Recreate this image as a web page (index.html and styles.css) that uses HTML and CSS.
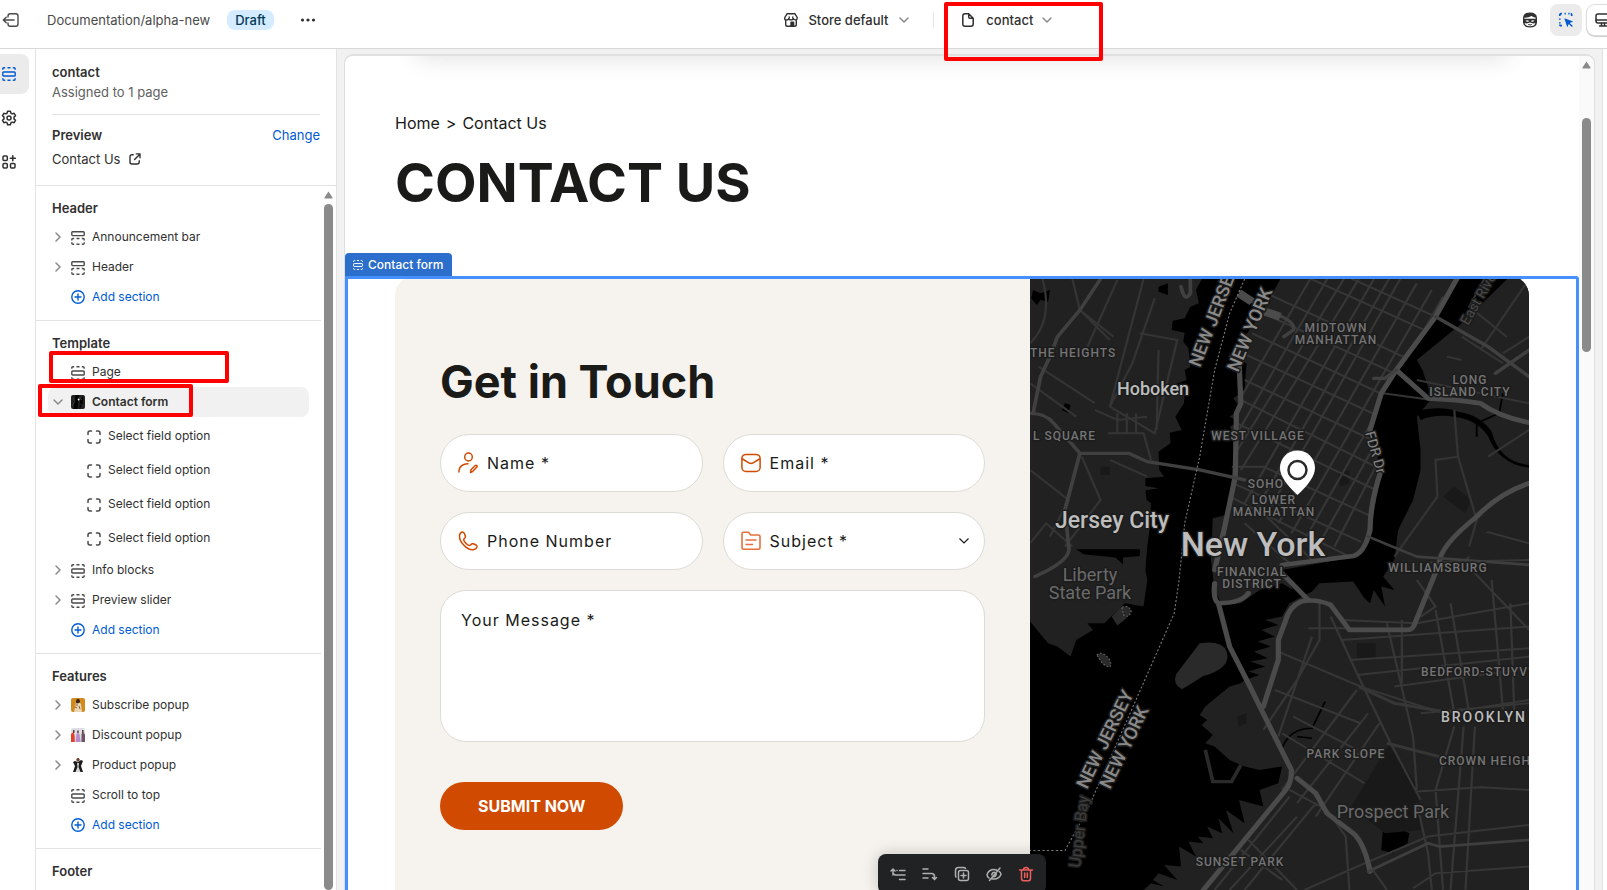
FILE: index.html
```html
<!DOCTYPE html>
<html lang="en">
<head>
<meta charset="utf-8">
<title>Documentation/alpha-new - contact</title>
<link rel="stylesheet" href="styles.css">
</head>
<body>
<svg class="defs" aria-hidden="true">
  <symbol id="i-chev" viewBox="0 0 8 12"><path d="M2 2l4 4-4 4" fill="none" stroke="currentColor" stroke-width="1.5" stroke-linecap="round" stroke-linejoin="round"/></symbol>
  <symbol id="i-down" viewBox="0 0 12 8"><path d="M2 2l4 4 4-4" fill="none" stroke="currentColor" stroke-width="1.5" stroke-linecap="round" stroke-linejoin="round"/></symbol>
  <symbol id="i-top" viewBox="0 0 14 14"><g fill="none" stroke="currentColor" stroke-width="1.4"><rect x=".8" y=".8" width="12.400" height="3.800" rx=".8"/><path d="M.8 9.400V8.600Q.8 7.500 2 7.500H3.200M5.500 7.500h3M10.800 7.500H12Q13.200 7.500 13.200 8.600V9.400M.8 11.300V12Q.8 13.200 2 13.200H3.200M5.500 13.200h3M10.800 13.200H12Q13.200 13.200 13.200 12V11.300"/></g></symbol>
  <symbol id="i-section" viewBox="0 0 14 14"><g fill="none" stroke="currentColor" stroke-width="1.4"><rect x=".8" y="5" width="12.400" height="4" rx=".8"/><path d="M.8 2.800V2Q.8 .8 2 .8H3.200M5.500 .8h3M10.800 .8H12Q13.200 .8 13.200 2V2.800M.8 11.200V12Q.8 13.200 2 13.200H3.200M5.500 13.200h3M10.800 13.200H12Q13.200 13.200 13.200 12V11.200"/></g></symbol>
  <symbol id="i-block" viewBox="0 0 14 14"><path d="M1 4.500V3Q1 1 3 1h1.500M9.500 1H11q2 0 2 2v1.500M13 9.500V11q0 2-2 2H9.500M4.500 13H3q-2 0-2-2V9.500" fill="none" stroke="currentColor" stroke-width="1.500" stroke-linecap="round"/></symbol>
  <symbol id="i-add" viewBox="0 0 14 14"><g fill="none" stroke="currentColor" stroke-width="1.400" stroke-linecap="round"><circle cx="7" cy="7" r="6.200"/><path d="M7 4v6M4 7h6"/></g></symbol>
</svg>

<header class="topbar">
  <div class="bar-left">
    <button class="plain" aria-label="Exit"><svg width="18" height="16" viewBox="0 0 18 16" fill="none" stroke="#4a4a4a" stroke-width="1.400" stroke-linecap="round" stroke-linejoin="round"><path d="M6 5V4q0-2.300 2.300-2.300h5.400Q16 1.700 16 4v8q0 2.300-2.300 2.300H8.300Q6 14.300 6 12v-1M12 8H1.500M4.200 5.200L1.300 8l2.900 2.800"/></svg></button>
    <span class="theme-name">Documentation/alpha-new</span>
    <span class="badge">Draft</span>
    <button class="plain more" aria-label="More actions"><svg width="16" height="4" viewBox="0 0 16 4" fill="#303030"><circle cx="2.500" cy="2" r="1.600"/><circle cx="8" cy="2" r="1.600"/><circle cx="13.500" cy="2" r="1.600"/></svg></button>
  </div>
  <div class="bar-mid">
    <button class="plain pick"><svg width="14" height="14" viewBox="0 0 14 14" fill="none" stroke="#303030" stroke-width="1.400" stroke-linejoin="round"><path d="M3 .8h8l2.200 3.700v.7q0 1.700-1.700 1.700T9.100 5.200q0 1.700-2.100 1.700T4.900 5.200q0 1.700-2.400 1.700T.8 5.200v-.7zM1.700 7v4.400q0 1.800 1.800 1.800h7q1.800 0 1.800-1.800V7M5.300 4.800V3.500M8.700 4.800V3.500"/><path d="M7 9.300h2.600v3.900H7z" fill="#303030"/></svg><span>Store default</span><svg class="caret" width="12" height="8"><use href="#i-down"/></svg></button>
    <span class="vline"></span>
    <button class="plain pick page-pick"><svg width="12" height="14" viewBox="0 0 12 14" fill="none" stroke="#303030" stroke-width="1.500" stroke-linejoin="round"><path d="M3 .8h3.700L11.200 5.300V11q0 2.200-2.200 2.200H3Q.8 13.200.8 11V3Q.8.8 3 .8zM6.700.8V4q0 1.300 1.300 1.300h3.200"/></svg><span>contact</span><svg class="caret" width="12" height="8"><use href="#i-down"/></svg><i class="mark mark-top"></i></button>
  </div>
  <div class="bar-right">
    <button class="plain" aria-label="Assistant"><svg width="16" height="16" viewBox="0 0 16 16"><path d="M8 .5Q14.800.5 15 6v4.500Q14.500 15.500 8 15.500T1 10.500V6Q1.200.5 8 .5z" fill="#303030"/><path d="M2.300 5.800Q6.500 6 9.500 4q1.500 1.400 4.200 1.700v1H2.300z" fill="#fff"/><path d="M3.500 8.700q2-1 3.600.2Q5.500 10.800 3.500 8.700zM12.500 8.700q-2-1-3.600.2Q10.500 10.800 12.500 8.700z" fill="#fff"/><path d="M2.600 11Q5 12 8 10.600 11 12 13.400 11 12.500 14.200 8 14.200T2.600 11z" fill="#fff"/><path d="M6.200 12.500q1.800.9 3.600 0" stroke="#303030" fill="none"/></svg></button>
    <button class="tool on" aria-label="Inspector"><svg width="16" height="16" viewBox="0 0 16 16"><path d="M1.800 4V3q0-1.300 1.300-1.300H4M6.500 1.700h1.300M10.300 1.700h1.300M13.700 4V3q0-1.300-1-1.300M1.800 6.500v1.300M1.800 10.300v1.300M4 13.700H3q-1.200 0-1.200-1.200" fill="none" stroke="#005bd3" stroke-width="1.700"/><path d="M6.300 6.300l8.900 3.100-3.500 1.600 3.200 3.100-1 1-3.100-3.200-1.500 3.300z" fill="#005bd3"/></svg></button>
    <button class="tool device" aria-label="Desktop"><svg width="16" height="14" viewBox="0 0 16 14" fill="none" stroke="#303030" stroke-width="1.500" stroke-linecap="round"><rect x="1" y="1" width="14" height="9" rx="2"/><path d="M1 7h14M6.500 10v2.500M9.500 10v2.500M4.500 13h7"/></svg></button>
  </div>
</header>

<div class="body">
  <nav class="rail" aria-label="Editor panels">
    <button class="rail-btn on" aria-label="Sections"><svg width="14" height="14"><use href="#i-section"/></svg></button>
    <button class="rail-btn" aria-label="Theme settings"><svg width="16" height="16" viewBox="0 0 16 16" fill="none" stroke="#303030" stroke-width="1.500" stroke-linejoin="round"><path d="M6.600 1.200h2.800l.5 2 1.200.7 2-.6 1.400 2.400-1.500 1.400v1.800l1.500 1.400-1.400 2.400-2-.6-1.200.7-.5 2H6.600l-.5-2-1.200-.7-2 .6-1.400-2.400L3 8.900V7.100L1.500 5.700l1.400-2.400 2 .6 1.200-.7z"/><circle cx="8" cy="8" r="2"/></svg></button>
    <button class="rail-btn" aria-label="App embeds"><svg width="14" height="14" viewBox="0 0 14 14" fill="none" stroke="#303030" stroke-width="1.500" stroke-linecap="round"><rect x="1" y="1" width="4.300" height="4.500" rx="1"/><rect x="1" y="8.500" width="4.300" height="4.500" rx="1"/><rect x="8.500" y="8.500" width="4.500" height="4.500" rx="1"/><path d="M10.800.8v5M8.300 3.300h5"/></svg></button>
  </nav>

  <aside class="sidebar">
    <div class="side-top">
      <h2>contact</h2>
      <p class="sub">Assigned to 1 page</p>
      <div class="preview-row"><h2>Preview</h2><a href="#">Change</a></div>
      <p class="current">Contact Us <svg width="12" height="12" viewBox="0 0 12 12" fill="none" stroke="#303030" stroke-width="1.400" stroke-linecap="round" stroke-linejoin="round"><path d="M4.200 1.800H3Q1 1.800 1 3.800V9q0 2 2 2h5.200q2 0 2-2V7.800M7.200.9H11v3.900M11 .9L5.600 6.400"/></svg></p>
    </div>
    <div class="side-scroll">
      <div class="tree">
        <section class="group">
          <h3>Header</h3>
          <a class="row" href="#"><svg class="chev" width="8" height="12"><use href="#i-chev"/></svg><svg class="ico low" width="14" height="14"><use href="#i-top"/></svg><span>Announcement bar</span></a>
          <a class="row" href="#"><svg class="chev" width="8" height="12"><use href="#i-chev"/></svg><svg class="ico low" width="14" height="14"><use href="#i-top"/></svg><span>Header</span></a>
          <button class="row add"><i class="chev"></i><svg width="14" height="14"><use href="#i-add"/></svg><span>Add section</span></button>
        </section>
        <section class="group">
          <h3>Template</h3>
          <a class="row" href="#"><i class="chev"></i><svg class="ico low" width="14" height="14"><use href="#i-section"/></svg><span>Page</span><i class="mark mark-page"></i></a>
          <a class="row selected" href="#"><svg class="chev open" width="8" height="12"><use href="#i-chev"/></svg><svg width="14" height="14" viewBox="0 0 14 14"><rect width="14" height="14" rx="2" fill="#202020"/><path d="M4.500 0L2.500 14h4l.5-5 1-9zM12 1L9 6l-.5 8 3-4z" fill="#000"/><path d="M2 3l2 3-3 5M8 2l3 3M9 9l4 2" stroke="#444" stroke-width=".6" fill="none"/><circle cx="7.600" cy="4.500" r=".9" fill="#fff"/></svg><span>Contact form</span><i class="mark mark-form"></i></a>
          <div class="sublist">
            <a class="row" href="#"><svg class="ico low" width="14" height="14"><use href="#i-block"/></svg><span>Select field option</span></a>
            <a class="row" href="#"><svg class="ico low" width="14" height="14"><use href="#i-block"/></svg><span>Select field option</span></a>
            <a class="row" href="#"><svg class="ico low" width="14" height="14"><use href="#i-block"/></svg><span>Select field option</span></a>
            <a class="row" href="#"><svg class="ico low" width="14" height="14"><use href="#i-block"/></svg><span>Select field option</span></a>
          </div>
          <a class="row" href="#"><svg class="chev" width="8" height="12"><use href="#i-chev"/></svg><svg class="ico low" width="14" height="14"><use href="#i-section"/></svg><span>Info blocks</span></a>
          <a class="row" href="#"><svg class="chev" width="8" height="12"><use href="#i-chev"/></svg><svg class="ico low" width="14" height="14"><use href="#i-section"/></svg><span>Preview slider</span></a>
          <button class="row add"><i class="chev"></i><svg width="14" height="14"><use href="#i-add"/></svg><span>Add section</span></button>
        </section>
        <section class="group">
          <h3>Features</h3>
          <a class="row" href="#"><svg class="chev" width="8" height="12"><use href="#i-chev"/></svg><svg width="14" height="14" viewBox="0 0 14 14"><rect width="14" height="14" rx="2" fill="#d18a1e"/><path d="M5 5l3-1 2 2 1 8H3z" fill="#ead6b4"/><path d="M5 3l1-2h2l1 2-.5 2-3 .5z" fill="#3a2314"/><path d="M4 9l2 1M8 8l1 3M6 6v2" stroke="#7a5430" stroke-width=".9"/></svg><span>Subscribe popup</span></a>
          <a class="row" href="#"><svg class="chev" width="8" height="12"><use href="#i-chev"/></svg><svg width="14" height="14" viewBox="0 0 14 14"><rect width="14" height="14" rx="2" fill="#dedee6"/><path d="M0 6l2.500-2 1.200 4v6H0z" fill="#e0432c"/><path d="M5.500 6l1.500-1 1.500 1 1.200 8H4.500z" fill="#b98cc9"/><path d="M10.500 6l1.500-2 2 2.500V14h-3.500z" fill="#6b5560"/><path d="M2 2h1.500v3H2zM6.200 2.500h1.500v2.500H6.200zM11 2h1.500v3H11z" fill="#5e3b30"/></svg><span>Discount popup</span></a>
          <a class="row" href="#"><svg class="chev" width="8" height="12"><use href="#i-chev"/></svg><svg width="14" height="14" viewBox="0 0 14 14"><path d="M4 3l3 1 3-2 2 1-2 5 2 6H2l2-6-2-4z" fill="#1b1b1b"/><path d="M6 5h2l-.5 4 2 5H4.500l2-5z" fill="#d8d8d8"/><circle cx="7" cy="1.800" r="1.700" fill="#6b3b26"/></svg><span>Product popup</span></a>
          <a class="row" href="#"><i class="chev"></i><svg class="ico low" width="14" height="14"><use href="#i-section"/></svg><span>Scroll to top</span></a>
          <button class="row add"><i class="chev"></i><svg width="14" height="14"><use href="#i-add"/></svg><span>Add section</span></button>
        </section>
        <section class="group"><h3>Footer</h3></section>
      </div>
      <div class="scrollbar"><svg width="9" height="8" viewBox="0 0 9 8"><path d="M4.500.5L8.500 6.500Q8.800 7.500 8 7.500H1Q.2 7.500.5 6.500z" fill="#8a8a8a"/></svg><i class="thumb"></i></div>
    </div>
  </aside>

  <main class="stage">
    <div class="frame">
      <div class="page">
        <nav class="crumbs" aria-label="Breadcrumb"><a href="#">Home</a><span>&gt;</span><span>Contact Us</span></nav>
        <h1>CONTACT US</h1>
        <section class="contact">
          <span class="tag"><svg width="10" height="10"><use href="#i-section"/></svg>Contact form</span>
          <div class="card">
            <form class="form">
              <h2>Get in Touch</h2>
              <div class="fields">
                <label class="field"><svg width="20" height="22" viewBox="0 0 20 22" fill="none" stroke="#d04a02" stroke-width="1.500" stroke-linecap="round" stroke-linejoin="round"><ellipse cx="10.500" cy="5" rx="3.800" ry="4"/><path d="M.9 20q0-5.500 4.400-7.300Q7.500 11.700 10 11.700M12.500 20.500l.5-2.800 4.300-4.200q.8-.6 1.500.1t.1 1.500L14.600 19.600z"/></svg><input type="text" placeholder="Name *" aria-label="Name"></label>
                <label class="field"><svg width="20" height="20" viewBox="0 0 20 20" fill="none" stroke="#d04a02" stroke-width="1.500" stroke-linecap="round" stroke-linejoin="round"><rect x=".9" y="1.400" width="18.200" height="17" rx="4"/><path d="M1.500 6l6.400 3.800q2.100 1.200 4.200 0L18.500 6"/></svg><input type="email" placeholder="Email *" aria-label="Email"></label>
                <label class="field"><svg width="20" height="20" viewBox="0 0 20 20" fill="none" stroke="#d04a02" stroke-width="1.500" stroke-linecap="round" stroke-linejoin="round"><path d="M1.500 4.200Q2.500.8 4.600 1q1.300.1 2 2l.7 2q.4 1.500-.9 2.500-1.200 1-.2 2.700 1.500 2.500 4 3.900 1.500.8 2.500-.4 1.100-1.400 2.600-.9l2.200.9q1.800.8 1.500 2.200-.6 2.500-4 2.900-5 .2-9.500-5Q1 9 1.500 4.200z"/></svg><input type="tel" placeholder="Phone Number" aria-label="Phone Number"></label>
                <label class="field"><svg width="20" height="20" viewBox="0 0 20 20" fill="none" stroke="#e4703c" stroke-width="1.600" stroke-linejoin="round"><path d="M1 2.800Q1 1.200 2.600 1.200H7.500L9.800 4h7.800Q19 4 19 5.500v11.300Q19 18.300 17.500 18.300h-15Q1 18.300 1 16.800zM4.500 9h11M4.500 13.500h7.500"/></svg><select aria-label="Subject"><option>Subject *</option></select><svg class="sel" width="12" height="8" viewBox="0 0 12 8" fill="none" stroke="#1a1a18" stroke-width="1.200"><path d="M1.500 1.500L6 6l4.500-4.500"/></svg></label>
                <textarea class="message" placeholder="Your Message *" aria-label="Your Message"></textarea>
              </div>
              <button type="button" class="submit">SUBMIT NOW</button>
            </form>
            <div class="map">
<svg viewBox="0 0 499 614" role="img" aria-label="Map of New York">
  <defs>
    <clipPath id="mh"><path d="M700 27L600 200 605 280 580 430 565 600 545 760 690 880 890 855 930 780 965 620 935 480 960 360 1010 280 1100 140 1180 27z"/></clipPath>
    <clipPath id="bk"><path d="M1000 930L980 985 780 975 700 1040 680 1150 490 1330 510 1430 700 1500 640 1560 430 1730 330 1860H1360V720z"/></clipPath>
    <clipPath id="nj"><path d="M27 27H470L410 160 440 190 450 290 415 440 370 550 340 640 350 700 340 820 27 840z"/></clipPath>
  </defs>
  <rect width="499" height="614" fill="#212121"/>
  <g transform="translate(-10 -6) scale(.3744 .3333)">
    <g fill="#000">
      <path d="M490 18L470 60 478 100 455 110 440 145 408 152 405 180 440 188 436 215 450 235 455 290 440 300 445 330 410 345 415 370 440 372 438 400 415 440 432 480 400 488 402 520 370 545 372 600 385 620 335 625 335 648 370 655 335 662 338 690 350 700 347 770 340 830 335 900 340 930 330 1010 280 1000 225 1060 180 1060 195 1080 150 1110 135 1160 100 1130 75 1120 27 1055V1860H330L350 1840 385 1850 355 1830 370 1810 420 1830 385 1785 430 1790 425 1730 470 1760 450 1715 490 1720 475 1700 515 1705 500 1670 540 1690 530 1645 570 1690 550 1620 600 1660 585 1590 650 1610 640 1560 690 1540 700 1490 640 1500 600 1490 560 1470 520 1430 495 1420 515 1395 485 1365 500 1350 480 1335 495 1310 560 1250 590 1240 600 1230 640 1215 610 1205 655 1190 615 1175 662 1165 625 1145 670 1130 635 1115 680 1100 645 1080 690 1065 655 1050 700 1040 720 1000 780 965 800 940 890 935 920 985 935 1000 945 960 975 1010 965 950 1000 960 970 920 1000 870 1010 780 1050 690 1070 600 1070 540 1060 440 1100 385 1075 300 1060 270 1180 160 1310 18H1180L1100 150 1015 290 960 380 935 480 965 600 940 760 900 860 700 900 730 960 700 940 640 960 590 1000 540 1005 520 960 510 870 515 745 550 735 565 640 575 500 560 470 585 455 560 440 590 415 570 385 600 360 605 280 555 260 600 200 650 120 700 18z"/>
      <path d="M35 60l20 10 25-10-5 35-20-5-10 15-15-20zM370 50l25-10v35l-25-10zM120 400l15 5-5 25-18-10zM150 838h170v20l-45 5v20l-20-20-85-10zM970 1670l30 0 40 20-5 30-40 30-30-10z"/>
      <path d="M1060 425q60-20 110 0 60 10 90 60 20 90 100 100v8q-80-10-110-95-30-50-90-58-50-8-90 10z"/>
      <path d="M700 1435q20-60 80-60l35-80M740 1400l40 5M1220 500v-40l60-30 10-60M970 1580q40-20 55 20" fill="none" stroke="#000" stroke-width="5"/>
    </g>
    <g fill="#2a2a2a">
      <path d="M480 1120q60-10 72 25 15 50-65 75-40 30-55 38-25-15-15-45zM245 1040l25-30 15 35-25 22z"/>
      <path d="M205 1155q15-15 35 15 10 35-20 10zM272 1012q20-8 25 12-5 22-20 12z" stroke="#666" stroke-width="3" stroke-dasharray="5 5"/>
      <path d="M495 1440l20 95h50l25-50" fill="none" stroke="#2a2a2a" stroke-width="10"/>
    </g>
    <g fill="#191919"><path d="M985 1425l80 130 5 125-95 10-90-80zM1130 680l30-30 45 40-15 40zM850 610l30-10v40l-25 10zM900 1120h50v50h-50zM215 590h25v25h-25zM580 1340l25-10v30l-20 10z"/></g>
    <g clip-path="url(#mh)" fill="none" stroke="#363636" stroke-width="6">
      <path d="M600 700L950 18M625 730L990 18M655 740L1020 18M690 760L1060 40M725 790L1100 60M760 810L1130 80M800 820L1000 420M840 830L1010 460M570 420L780 18M580 490L825 18M570 560L870 18M590 600L910 18"/>
      <path d="M640 60L1100 300M650 130L1020 320M620 190L1000 390M605 255L980 450M600 330L960 520M590 390L950 590M580 460L950 660M560 590H650L940 740M570 640L920 820M560 680L880 860M760 18L1120 200M870 18L1150 160M600 760L720 880M640 720L780 870"/>
    </g>
    <g fill="none" stroke="#343434" stroke-width="6" clip-path="url(#nj)">
      <path d="M60 27Q90 150 27 220M140 27L160 120 240 210M260 30L180 230M330 27L240 410M360 85L300 280 240 410 360 490 420 210 320 190M370 240L365 480M200 420L260 450 340 440M235 490H330L350 570M160 120L250 200M27 340L150 440M50 290L200 400M27 600L130 690 80 800M165 560L215 690 120 830M27 820L70 760 140 830M260 430v60M285 430v60M310 430v60M240 570L340 620"/>
    </g>
    <g clip-path="url(#bk)" fill="none" stroke="#363636" stroke-width="6">
      <path d="M690 1145L910 1250 1130 1330 1360 1290M860 1110L1360 1070M880 1170L1360 1135M900 1215L1360 1160M1000 1250L1360 1195M1070 1330L1360 1300M770 1075H880M800 1000V1110L740 1230 650 1380M780 1100L690 1400M830 1040L900 1210 990 1420 1070 1590M680 1260L910 1360M730 1340L900 1440M700 1390L920 1540M900 1260L700 1560M930 1330L740 1600M960 1360L790 1640M720 1560L820 1620 870 1700 880 1860M860 1050L1060 1060 1360 1000M980 1060L1050 1400 1060 1560M1020 1050L1020 1240M1110 1020L1160 1330M1150 1000L1200 1330M1260 930L1290 1320M1310 1000L1320 1320M1160 1370L1110 1560 1130 1860M1185 1370L1150 1860M1215 1370L1190 1860M1060 1565L1230 1552 1360 1560M1060 1600L1090 1750 1100 1860M1060 930L1110 1010 1070 1040M1190 880L1360 1080M1000 880L1360 870M1050 1855L1110 1810 1360 1790M760 1860L900 1790 1090 1700 1360 1665M930 1780L980 1860M520 1860L720 1580M560 1860L740 1640M600 1860L790 1600M610 1710L740 1860M590 1740L700 1830M1130 750L1360 820M1170 890L1200 860"/>
      <path d="M905 1250L1000 1300 1130 1325M980 1420L1120 1460" stroke-width="9"/>
    </g>
    <g fill="none" stroke="#343434" stroke-width="6"><path d="M1240 27L1200 110 1300 200M1360 27L1230 240M1290 250L1360 200M1180 200L1290 280M1060 330L1360 400M1160 420L1170 560 1110 570 1115 680 1000 860M1170 560L1220 750 1200 830M1360 480L1250 560M970 370L1100 390M1140 260l40 10"/></g>
    <g fill="none" stroke="#4b4b4b" stroke-linejoin="round" stroke-linecap="round" stroke-width="14">
      <path d="M1170 20L1110 140 1005 300 965 370 935 480M965 600Q935 700 935 780 920 850 890 858L700 885M1005 300L1090 385Q1180 390 1230 400 1280 440 1360 458M1360 640Q1280 670 1220 740 1120 830 1120 880L1055 1060Q1050 1080 1035 1080H880L830 1005Q790 985 750 995 720 1010 710 1050L690 1110V1170L650 1310M520 940Q515 990 530 1000L560 1130 610 1240 645 1320 725 1500Q725 1540 710 1560L490 1860M740 1525L790 1570 820 1630 890 1690Q920 1720 935 1805M700 910L770 990M585 270L590 400 578 430 575 620 545 780 520 900M530 1000Q590 1000 610 970"/>
      <path d="M160 550H290L340 575 480 600 600 630M27 430Q70 430 90 460L160 550 120 720 130 830Q140 870 40 920M215 27L160 120 100 200 80 260 55 320 35 430M590 65L620 95M650 120Q740 150 730 180L705 200M945 325H975L1005 300M430 50q10 50 25 20v-45M1110 140L1250 230 1360 320M1270 310L1360 240" stroke-width="10" stroke="#404040"/>
      <path d="M930 1805L1090 1720 1120 1730 1360 1710M930 800L1060 860 1360 885" stroke="#3e3e3e" stroke-width="8"/>
      <path d="M585 70l35 25M655 125l40 15" stroke-width="24" stroke-linecap="butt"/>
    </g>
    <path d="M600 27L560 130 520 300 480 560 440 760 425 930 412 1030 180 1620 120 1742H27" fill="none" stroke="#7a7a7a" stroke-width="3" stroke-dasharray="6 6"/>
  </g>
  <g class="place">
    <text x="306" y="56">MIDTOWN</text><text x="306" y="68">MANHATTAN</text><text x="0" y="81" class="st">THE HEIGHTS</text>
    <text x="3" y="164" class="st">L SQUARE</text><text x="228" y="164">WEST VILLAGE</text><text x="236" y="212">SOHO</text>
    <text x="244" y="228">LOWER</text><text x="244" y="240">MANHATTAN</text><text x="222" y="300">FINANCIAL</text><text x="222" y="312">DISTRICT</text>
    <text x="440" y="108">LONG</text><text x="440" y="120">ISLAND CITY</text><text x="408" y="296">WILLIAMSBURG</text>
    <text x="391" y="400" class="st">BEDFORD-STUYV</text><text x="316" y="482">PARK SLOPE</text><text x="409" y="489" class="st">CROWN HEIGH</text><text x="210" y="590">SUNSET PARK</text>
  </g>
  <g class="city">
    <text x="123" y="119" font-size="18">Hoboken</text><text x="82" y="252" font-size="23">Jersey City</text><text x="223" y="280" font-size="34">New York</text>
    <text x="411" y="446" class="bk">BROOKLYN</text>
  </g>
  <g class="park"><text x="60" y="305">Liberty</text><text x="60" y="323">State Park</text><text x="363" y="542">Prospect Park</text></g>
  <g class="state">
    <text transform="translate(170 92) rotate(-69)">NEW JERSEY</text><text transform="translate(208 97) rotate(-67)">NEW YORK</text>
    <text transform="translate(57 514) rotate(-64)">NEW JERSEY</text><text transform="translate(80 514) rotate(-64)">NEW YORK</text>
  </g>
  <g class="water"><text transform="translate(50 592) rotate(-83)">Upper Bay</text><text transform="translate(438 50) rotate(-60)" fill="#4a4a4a" font-size="14">East River</text><text transform="translate(335 157) rotate(74)" fill="#858585" font-size="14">FDR Dr</text></g>
  <path d="M267.500 219Q250 203 250 192a17.500 17.500 0 0 1 35 0Q285 203 267.500 219z" fill="#fff"/><circle cx="267.500" cy="194" r="9" fill="none" stroke="#2b2b2b" stroke-width="2.500"/>
</svg>
            </div>
          </div>
        </section>
      </div>
      <div class="scrollbar frame-bar"><svg width="9" height="8" viewBox="0 0 9 8"><path d="M4.500.5L8.500 6.500Q8.800 7.500 8 7.500H1Q.2 7.500.5 6.500z" fill="#8a8a8a"/></svg><i class="thumb"></i></div>
      <div class="float-wrap">
        <div class="float" role="toolbar" aria-label="Section actions">
          <button aria-label="Add above"><svg viewBox="0 0 16 16"><path d="M3 9V3M1 5l2-2 2 2M3 6.500Q3 9 6 9h9M9.500 4.500H15M9.500 13.500H15M7 4.500h.1" /></svg></button>
          <button aria-label="Add below"><svg viewBox="0 0 16 16"><path d="M1 3h5M1 7.500h8.500q3 0 3 3V13M10.500 11.500l2 2 2-2M1 12h5"/></svg></button>
          <button aria-label="Duplicate"><svg viewBox="0 0 16 16"><rect x="4.500" y="4.500" width="10" height="10" rx="2"/><path d="M2 11Q1.500 10.500 1.500 9.500v-5q0-3 3-3h5q1.500 0 2 .8M9.500 7v5M7 9.500h5"/></svg></button>
          <button aria-label="Hide"><svg viewBox="0 0 16 16"><path d="M3 12Q1 10.300 1 8.500 3 3.500 8 3.500q1.500 0 2.500.5M13.300 5.500Q15 7 15 8.500 13 13 8 13q-1 0-2-.3M14 2L3.500 14.500M5.800 9Q6 6.500 8.500 6.300M10.300 8Q10 10.500 8 10.700"/></svg></button>
          <button class="del" aria-label="Delete"><svg viewBox="0 0 16 16"><path d="M1.500 4h13M5.500 4q0-2.500 2.500-2.500T10.500 4M3.500 4v8.500q0 2.200 2.200 2.200h4.600q2.200 0 2.200-2.200V4M6.700 7v4.500M9.300 7v4.500"/></svg></button>
        </div>
      </div>
    </div>
  </main>
</div>
</body>
</html>
```
FILE: styles.css
```css
* { box-sizing: border-box; }
html, body { height: 100%; margin: 0; }
body {
  display: flex;
  flex-direction: column;
  overflow: hidden;
  background: #fff;
  color: #303030;
  font: 400 13px/20px Inter, "Liberation Sans", sans-serif;
}
h1, h2, h3, p { margin: 0; }
a { color: inherit; text-decoration: none; }
button, input, select, textarea { font: inherit; color: inherit; }
svg { flex: none; display: block; }
.defs { position: absolute; width: 0; height: 0; }
.plain { display: flex; align-items: center; border: 0; padding: 0; background: none; }

/* Red callout frames */
.mark {
  position: absolute;
  border: 4px solid #fe0000;
  border-radius: 2px;
  pointer-events: none;
  z-index: 5;
}
.mark-top { top: -8px; left: -18px; width: 159px; height: 59px; }
.mark-page { top: -6px; left: 1px; width: 180px; height: 32px; }
.mark-form { top: -3px; left: -10px; width: 155px; height: 33px; }

/* Top bar */
.topbar {
  display: flex;
  justify-content: space-between;
  flex: none;
  height: 49px;
  padding: 4px 0 12px 2px;
  border-bottom: 1px solid #d9d9d9;
}
.bar-left, .bar-mid, .bar-right { display: flex; align-items: center; }
.theme-name { margin: 0 17px 0 27px; color: #4a4a4a; }
.badge {
  padding: 0 8px;
  border-radius: 8px;
  background: #d5ebff;
  color: #003a5a;
  font-weight: 500;
}
.more { margin-left: 26px; }
.pick { position: relative; font-weight: 500; gap: 10px; }
.page-pick { gap: 12px; }
.page-pick .caret { margin-left: -4px; }
.caret { color: #8a8a8a; }
.vline { width: 1px; height: 16px; margin: 0 28px 0 23px; background: #e3e3e3; }
.bar-right { gap: 12px; }
.tool {
  display: flex;
  align-items: center;
  justify-content: center;
  width: 32px;
  height: 32px;
  padding: 0;
  border: 0;
  border-radius: 8px;
  background: none;
}
.tool.on { background: #ebebeb; }
.tool.device {
  justify-content: flex-start;
  width: 44px;
  height: 30px;
  margin: 0 -24px 0 -7px;
  padding-left: 8px;
  background: #fff;
  box-shadow: 0 0 0 1px #ddd, 0 1px 1px 1px #ccc;
}

/* Body columns */
.body { display: flex; flex: 1; min-height: 0; }
.rail {
  display: flex;
  flex-direction: column;
  gap: 4px;
  flex: none;
  width: 36px;
  padding-top: 5px;
  border-right: 1px solid #e3e3e3;
}
.rail-btn {
  display: flex;
  align-items: center;
  justify-content: center;
  width: 29px;
  height: 40px;
  padding: 0 11px 0 0;
  border: 0;
  border-radius: 0 8px 8px 0;
  background: none;
}
.rail-btn.on { background: #ebebeb; color: #005bd3; }
.sidebar {
  display: flex;
  flex-direction: column;
  flex: none;
  width: 300px;
}
.side-top { padding: 13px 16px 16px; border-bottom: 1px solid #e3e3e3; }
.side-top h2, .group h3 { font-size: 13px; font-weight: 600; }
.sub { color: #616161; padding-bottom: 12px; border-bottom: 1px solid #e3e3e3; }
.preview-row { display: flex; justify-content: space-between; margin: 10px 0 4px; }
.preview-row a { color: #005bd3; }
.current { display: flex; align-items: center; gap: 9px; }
.side-scroll { display: flex; flex: 1; min-height: 0; }
.tree { flex: 1; min-width: 0; }
.group { padding: 12px 12px 8px; border-bottom: 1px solid #e3e3e3; }
.group:last-child { border: 0; }
.group h3 { margin: 0 4px 4px; }
.row {
  position: relative;
  display: flex;
  align-items: center;
  gap: 7px;
  width: 100%;
  height: 30px;
  padding: 0 0 0 6px;
  border: 0;
  background: none;
  font-size: 12px;
  text-align: left;
}
.row .ico { color: #4a4a4a; }
.low { margin-top: 2px; }
.chev { width: 8px; margin-right: 2px; color: #8a8a8a; flex: none; }
.open { transform: rotate(90deg); }
.row.add { color: #005bd3; }
.selected { border-radius: 8px; background: #f1f1f1; font-weight: 600; }
.sublist { padding: 2px 0 0; }
.sublist .row { height: 34px; padding-left: 39px; }
.scrollbar {
  display: flex;
  flex-direction: column;
  align-items: center;
  flex: none;
  gap: 5px;
  width: 15px;
  padding-top: 5px;
}
.thumb { width: 9px; flex: 1; border-radius: 5px; background: #8a8a8a; }

/* Preview */
.stage {
  flex: 1;
  min-width: 0;
  margin-right: 4px;
  padding: 6px 8px 0 8px;
  border: solid #e3e3e3;
  border-width: 0 1px;
  background: #f1f1f1;
}
.frame {
  position: relative;
  display: flex;
  height: 100%;
  overflow: hidden;
  border-top: 1px solid #e0e0e0;
  border-radius: 8px 8px 0 0;
  background: #fff;
  box-shadow: 0 0 0 1px #dedede;
}
.frame::before {
  content: "";
  position: absolute;
  top: -24px;
  left: 75px;
  right: 90px;
  height: 20px;
  box-shadow: 0 2px 24px 4px rgba(0, 0, 0, .12);
}
.frame-bar { background: #fafafa; gap: 49px; }
.frame-bar .thumb { flex: none; height: 234px; }
.page { flex: 1; min-width: 0; padding-top: 55px; color: #1a1a18; }
.crumbs {
  display: flex;
  gap: 6px;
  padding: 0 50px;
  font-size: 16px;
  line-height: 24px;
}
h1 {
  margin: 18px 50px 63px;
  font-size: 54px;
  line-height: 60px;
  font-weight: 700;
}
.contact { position: relative; padding: 0 50px; }
.contact::after {
  content: "";
  position: absolute;
  inset: 0;
  border: 3px solid #458fff;
  border-radius: 0 3px 0 0;
  pointer-events: none;
}
.tag {
  position: absolute;
  left: 0;
  bottom: 100%;
  display: flex;
  align-items: center;
  gap: 5px;
  height: 23px;
  padding: 0 9px 0 8px;
  border-radius: 4px 4px 0 0;
  background: #2c6ecb;
  color: #fff;
  font-size: 12px;
  font-weight: 500;
}
.card {
  display: grid;
  grid-template-columns: 56% 44%;
  overflow: hidden;
  border-radius: 20px;
}
.form { padding: 78px 45px 100px; background: #f6f3ee; }
.form h2 { margin-bottom: 24px; font-size: 45px; line-height: 56px; font-weight: 700; }
.fields {
  display: grid;
  grid-template-columns: repeat(2, minmax(0, 1fr));
  gap: 20px;
  font-size: 16px;
  letter-spacing: 1px;
}
.field {
  display: flex;
  align-items: center;
  gap: 9px;
  height: 58px;
  padding: 0 14px 0 17px;
  border: 1px solid #dedad6;
  border-radius: 29px;
  background: #fff;
}
.field input, .field select {
  flex: 1;
  min-width: 0;
  padding: 0;
  border: 0;
  outline: 0;
  background: none;
  letter-spacing: inherit;
}
.field select { appearance: none; }
.message {
  display: block;
  grid-column: 1 / -1;
  width: 100%;
  height: 152px;
  padding: 17px 20px;
  border: 1px solid #dedad6;
  border-radius: 26px;
  outline: 0;
  resize: none;
  background: #fff;
  line-height: 24px;
  letter-spacing: inherit;
}
::placeholder { color: #1a1a18; opacity: 1; }
.submit {
  margin-top: 40px;
  height: 48px;
  padding: 0 38px;
  border: 0;
  border-radius: 24px;
  background: #d04a02;
  color: #fff;
  font-size: 16px;
  font-weight: 700;
}

/* Map */
.map { overflow: hidden; background: #212121; }
.map svg { width: 100%; height: auto; font-family: Roboto, sans-serif; }
.map text { paint-order: stroke; stroke: #1c1c1c; stroke-width: 3px; stroke-linejoin: round; }
.place { font-size: 12px; font-weight: 500; letter-spacing: 1px; fill: #757575; text-anchor: middle; }
.place .st { text-anchor: start; }
.city { fill: #bdbdbd; font-weight: 500; text-anchor: middle; }
.city .bk { font-size: 14px; letter-spacing: 2px; text-anchor: start; }
.park { fill: #6a6a6a; font-size: 18px; text-anchor: middle; }
.state { fill: #8a8a8a; font-size: 18px; font-weight: 500; }
.water { fill: #3d3d3d; font-size: 16px; }

/* Floating section toolbar */
.float-wrap {
  position: absolute;
  left: 0;
  right: 15px;
  bottom: -4px;
  display: flex;
  justify-content: center;
}
.float {
  display: flex;
  gap: 16px;
  padding: 12px 12px;
  border-radius: 8px;
  background: #202224;
  box-shadow: 0 0 16px rgba(0, 0, 0, .2);
}
.float button { padding: 0; border: 0; background: none; color: #b0b0b0; }
.float svg { width: 16px; height: 16px; fill: none; stroke: currentColor; stroke-width: 1.5; stroke-linecap: round; }
.float .del { color: #ee5f5b; }
```
